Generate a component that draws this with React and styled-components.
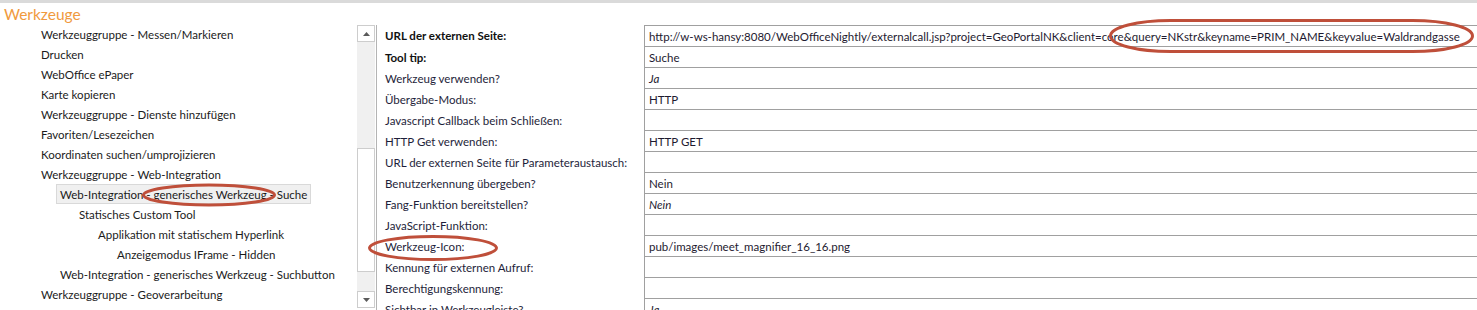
import styled, { createGlobalStyle } from 'styled-components';

const GlobalStyle = createGlobalStyle`
    body {
        margin: 0;
        background: #fff;
        font-family: Lato, "Open Sans", sans-serif;
        font-size: 11.5px;
        color: #1b1b1b;
        overflow: hidden;
    }
`;

const Page = styled.div`
    position: relative;
    width: 1477px;
    height: 310px;
    border-top: 3px solid #dadada;
    box-sizing: border-box;
    overflow: hidden;
`;

const Title = styled.div`
    height: 21px;
    padding-left: 4px;
    font-size: 15.5px;
    line-height: 23px;
    color: #f09a3e;
`;

const Body = styled.div`
    display: flex;
    align-items: flex-start;
`;

const Tree = styled.div`
    width: 357px;
    flex-shrink: 0;
`;

const TreeRow = styled.div`
    height: 20px;
    display: flex;
    align-items: center;
    padding-left: ${p => 40 + p.$level * 19}px;
`;

const TreeLabel = styled.span`
    height: 18px;
    line-height: 19px;
    padding: 0 3px;
    margin-left: -3px;
    white-space: nowrap;
    background: ${p => (p.$selected ? '#f0f0f0' : 'transparent')};
    border: 1px solid ${p => (p.$selected ? '#d9d9d9' : 'transparent')};
`;

const Scrollbar = styled.div`
    width: 18px;
    height: 283px;
    margin-top: 1px;
    flex-shrink: 0;
    display: flex;
    flex-direction: column;
    background: #f0f0f0;
`;

const ScrollButton = styled.div`
    height: 17px;
    box-sizing: border-box;
    border: 1px solid #cdcdcd;
    background: #fff;
    display: flex;
    align-items: center;
    justify-content: center;
`;

const Track = styled.div`
    flex: 1;
    display: flex;
    flex-direction: column;
`;

const Thumb = styled.div`
    margin-top: 106px;
    height: 124px;
    box-sizing: border-box;
    border: 1px solid #cdcdcd;
    background: #fff;
`;

const Grid = styled.div`
    flex: 1;
    margin-left: 1px;
    margin-top: 1px;
    display: grid;
    grid-template-columns: 267px 1fr;
    border-left: 1px solid #b4b4b4;
`;

const Label = styled.div`
    height: 21px;
    line-height: 22px;
    padding-left: 8px;
    white-space: nowrap;
    font-weight: ${p => (p.$bold ? 700 : 400)};
    color: ${p => (p.$bold ? '#111' : '#1e1e3a')};
`;

const Value = styled.div`
    height: 20px;
    line-height: 21px;
    padding-left: 4px;
    white-space: nowrap;
    overflow: hidden;
    border-left: 1px solid #a0a0a0;
    border-bottom: 1px solid #a0a0a0;
    border-top: ${p => (p.$first ? '1px solid #a0a0a0' : 'none')};
    font-style: ${p => (p.$italic ? 'italic' : 'normal')};
    color: #1e1a30;
`;

const Mark = styled.svg`
    position: absolute;
    pointer-events: none;
    overflow: visible;
`;

const Arrow = ({ down }) => (
    <svg width="7" height="4" viewBox="0 0 7 4">
        <path d={down ? 'M0 0 L7 0 L3.5 4 Z' : 'M0 4 L7 4 L3.5 0 Z'} fill="#5a5a5a" />
    </svg>
);

const treeItems = [
    { text: 'Werkzeuggruppe - Messen/Markieren', level: 0 },
    { text: 'Drucken', level: 0 },
    { text: 'WebOffice ePaper', level: 0 },
    { text: 'Karte kopieren', level: 0 },
    { text: 'Werkzeuggruppe - Dienste hinzufügen', level: 0 },
    { text: 'Favoriten/Lesezeichen', level: 0 },
    { text: 'Koordinaten suchen/umprojizieren', level: 0 },
    { text: 'Werkzeuggruppe - Web-Integration', level: 0 },
    { text: 'Web-Integration - generisches Werkzeug - Suche', level: 1, selected: true },
    { text: 'Statisches Custom Tool', level: 2 },
    { text: 'Applikation mit statischem Hyperlink', level: 3 },
    { text: 'Anzeigemodus IFrame - Hidden', level: 4 },
    { text: 'Web-Integration - generisches Werkzeug - Suchbutton', level: 1 },
    { text: 'Werkzeuggruppe - Geoverarbeitung', level: 0 },
];

const props = [
    { label: 'URL der externen Seite:', bold: true, value: 'http://w-ws-hansy:8080/WebOfficeNightly/externalcall.jsp?project=GeoPortalNK&client=core&query=NKstr&keyname=PRIM_NAME&keyvalue=Waldrandgasse' },
    { label: 'Tool tip:', bold: true, value: 'Suche' },
    { label: 'Werkzeug verwenden?', value: 'Ja', italic: true },
    { label: 'Übergabe-Modus:', value: 'HTTP' },
    { label: 'Javascript Callback beim Schließen:', value: '' },
    { label: 'HTTP Get verwenden:', value: 'HTTP GET' },
    { label: 'URL der externen Seite für Parameteraustausch:', value: '' },
    { label: 'Benutzerkennung übergeben?', value: 'Nein' },
    { label: 'Fang-Funktion bereitstellen?', value: 'Nein', italic: true },
    { label: 'JavaScript-Funktion:', value: '' },
    { label: 'Werkzeug-Icon:', value: 'pub/images/meet_magnifier_16_16.png' },
    { label: 'Kennung für externen Aufruf:', value: '' },
    { label: 'Berechtigungskennung:', value: '' },
    { label: 'Sichtbar in Werkzeugleiste?', value: 'Ja', italic: true },
];

const App = () => {
    return (
        <Page>
            <GlobalStyle />
            <Title>Werkzeuge</Title>
            <Body>
                <Tree>
                    {treeItems.map((item, i) => (
                        <TreeRow key={i} $level={item.level}>
                            <TreeLabel $selected={item.selected}>{item.text}</TreeLabel>
                        </TreeRow>
                    ))}
                </Tree>
                <Scrollbar>
                    <ScrollButton><Arrow /></ScrollButton>
                    <Track>
                        <Thumb />
                    </Track>
                    <ScrollButton><Arrow down /></ScrollButton>
                </Scrollbar>
                <Grid>
                    {props.map((p, i) => [
                        <Label key={'l' + i} $bold={p.bold}>{p.label}</Label>,
                        <Value key={'v' + i} $first={i === 0} $italic={p.italic}>{p.value}</Value>,
                    ])}
                </Grid>
            </Body>
            <Mark style={{ left: 142, top: 180 }} width="134" height="24">
                <ellipse cx="67" cy="12" rx="65.5" ry="10" fill="none" stroke="#bf4f3a" strokeWidth="3" />
            </Mark>
            <Mark style={{ left: 368, top: 232 }} width="130" height="26">
                <ellipse cx="65" cy="13" rx="63.5" ry="11.5" fill="none" stroke="#bf4f3a" strokeWidth="3" />
            </Mark>
            <Mark style={{ left: 1109, top: 16 }} width="365" height="34">
                <rect x="1.5" y="1.5" width="362" height="31" rx="60" ry="15.5" fill="none" stroke="#bf4f3a" strokeWidth="3" />
            </Mark>
        </Page>
    );
};

export default App;
